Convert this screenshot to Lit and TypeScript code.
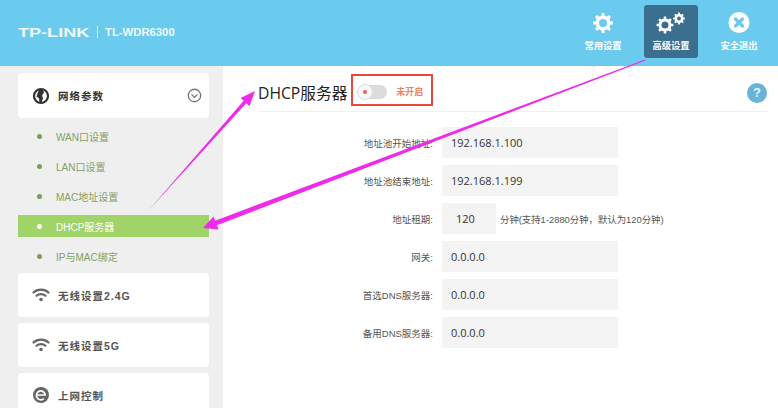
import { LitElement, html, css, svg } from "lit";
import { customElement } from "lit/decorators.js";

function gear(cx: number, cy: number, R: number, r: number, hole: number, teeth = 8) {
  let d = "";
  const step = (Math.PI * 2) / teeth;
  for (let i = 0; i < teeth; i++) {
    const a = i * step;
    const pts = [
      [r, a - step * 0.5],
      [r, a - step * 0.27],
      [R, a - step * 0.18],
      [R, a + step * 0.18],
      [r, a + step * 0.27],
    ];
    for (const [rad, t] of pts) {
      d += `${d ? "L" : "M"}${(cx + rad * Math.cos(t)).toFixed(2)} ${(cy + rad * Math.sin(t)).toFixed(2)}`;
    }
  }
  d += `Z M${cx - hole} ${cy}a${hole} ${hole} 0 1 0 ${hole * 2} 0a${hole} ${hole} 0 1 0 ${-hole * 2} 0Z`;
  return d;
}

const wifi = html`<svg class="ic" viewBox="0 0 20 20" width="20" height="20" fill="none" stroke="#666" stroke-width="2.2" stroke-linecap="round">
  <path d="M2.5 7.5C6.5 3.6 13.500 3.6 17.500 7.500"/><path d="M5.500 10.800C8 8.500 12 8.500 14.500 10.800"/><circle cx="10" cy="14.500" r="1.800" fill="#666" stroke="none"/></svg>`;

const subItems = ["WAN口设置", "LAN口设置", "MAC地址设置", "DHCP服务器", "IP与MAC绑定"];
const rows: [string, string][] = [
  ["地址池开始地址:", "192.168.1.100"],
  ["地址池结束地址:", "192.168.1.199"],
  ["地址租期:", "120"],
  ["网关:", "0.0.0.0"],
  ["首选DNS服务器:", "0.0.0.0"],
  ["备用DNS服务器:", "0.0.0.0"],
];

@customElement("app-root")
export class AppRoot extends LitElement {
  static styles = css`
    :host {
      display: block;
      position: relative;
      width: 778px;
      height: 408px;
      overflow: hidden;
      background: #fff;
      font-family: "Liberation Sans", "Noto Sans CJK SC", sans-serif;
    }
    .top {
      height: 66px;
      background: #6bcbee;
      display: flex;
      align-items: flex-start;
      padding: 0 12px 0 18px;
      box-sizing: border-box;
      color: #fff;
    }
    .logo {
      display: flex;
      align-items: center;
      height: 64px;
      font-weight: 700;
      color: #eef9fd;
    }
    .brand { font-size: 13px; transform: scaleX(1.39); transform-origin: left; width: 73px; white-space: nowrap; }
    .sep { width: 1px; height: 12px; background: #dff4fb; margin: 0 7px 0 6px; }
    .model { font-size: 11.300px; }
    .nav { margin-left: auto; display: flex; gap: 14px; padding-top: 5px; }
    .nav-item {
      width: 54px;
      height: 53px;
      border-radius: 3px;
      display: flex;
      flex-direction: column;
      align-items: center;
      font-size: 9.300px;
      line-height: 14px;
      font-weight: 700;
      box-sizing: border-box;
      padding-top: 5px;
    }
    .nav-item svg { display: block; flex: none; }
    .nav-item.on { background: #3a6f90; }
    .main { display: flex; height: 342px; }
    .side {
      width: 223px;
      flex: none;
      background: #efefef;
      box-sizing: border-box;
      padding: 7px 14px 0 18px;
    }
    .card {
      height: 44px;
      background: #fff;
      border-radius: 4px;
      display: flex;
      align-items: center;
      padding: 0 7px 0 14px;
      gap: 7px;
      font-size: 10.500px;
      font-weight: 700;
      color: #555;
      letter-spacing: 1px;
      margin-bottom: 6px;
    }
    .card.first { height: 45px; color: #333; margin-bottom: 7px; }
    .ic { flex: none; margin-left: -1px; }
    .chev { margin-left: auto; }
    .sub { margin-bottom: 6px; }
    .sub-item {
      height: 22px;
      margin-bottom: 8px;
      display: flex;
      align-items: center;
      padding-left: 19px;
      gap: 14px;
      font-size: 10px;
      color: #84a063;
    }
    .sub-item:last-child { margin-bottom: 0; }
    .dot { width: 5px; height: 5px; border-radius: 50%; background: #7d9c58; }
    .sub-item.on { background: #a0d468; color: #fff; }
    .sub-item.on .dot { background: #fff; }
    .content { flex: 1; padding: 8px 11px 0 35px; min-width: 0; }
    .head {
      height: 37px;
      display: flex;
      align-items: center;
      border-bottom: 1px solid #f0f0f0;
    }
    .title { font-size: 15.700px; color: #222; font-family: "Open Sans", "Noto Sans CJK SC", sans-serif; }
    .switch {
      display: flex;
      align-items: center;
      align-self: flex-start;
      box-sizing: border-box;
      width: 82px;
      height: 32px;
      margin-left: 4px;
      border: 2px solid #e8483c;
      padding: 3px 0 0 4px;
      font-size: 9px;
      font-weight: 700;
      color: #f0805f;
    }
    .track {
      position: relative;
      width: 30px;
      height: 14px;
      border-radius: 7px;
      background: #dcdcdc;
      margin-right: 9px;
    }
    .knob {
      position: absolute;
      left: 0;
      top: -1px;
      width: 16px;
      height: 16px;
      border-radius: 50%;
      background: #f8f8f8;
      border: 1px solid #ddd;
      box-sizing: border-box;
      display: flex;
      align-items: center;
      justify-content: center;
    }
    .knob i { width: 4px; height: 4px; border-radius: 50%; background: #f0604f; }
    .help {
      margin-left: auto;
      width: 20px;
      height: 20px;
      border-radius: 50%;
      background: #66b5d8;
      color: #e8f6fb;
      font-weight: 700;
      font-size: 13px;
      display: flex;
      align-items: center;
      justify-content: center;
    }
    .form { padding-top: 15px; display: flex; flex-direction: column; gap: 7px; }
    .row { display: flex; align-items: center; height: 31px; }
    .label { width: 175px; text-align: right; font-size: 9.500px; color: #555; flex: none; }
    .input {
      margin-left: 9px;
      width: 176px;
      height: 31px;
      background: #f4f4f4;
      display: flex;
      align-items: center;
      padding-left: 9px;
      box-sizing: border-box;
      font-size: 11px;
      color: #333;
      font-family: "Open Sans", sans-serif;
    }
    .input.short { width: 54px; padding-left: 14px; }
    .hint { margin-left: 4px; font-size: 9.400px; color: #555; white-space: nowrap; }
    .over { position: absolute; inset: 0; pointer-events: none; }
  `;

  render() {
    return html`
      <div class="top">
        <div class="logo"><span class="brand">TP-LINK</span><span class="sep"></span><span class="model">TL-WDR6300</span></div>
        <div class="nav">
          <div class="nav-item">
            <svg width="30" height="29" viewBox="0 0 30 29"><path fill="#fff" fill-rule="evenodd" d="${gear(15, 13, 10, 7.500, 4)}"/></svg>
            <span>常用设置</span>
          </div>
          <div class="nav-item on">
            <svg width="44" height="29" viewBox="0 0 44 29"><path fill="#fff" fill-rule="evenodd" d="${gear(16, 15, 8.500, 6.500, 3.500)}"/><path fill="#fff" fill-rule="evenodd" d="${gear(30, 8.500, 6, 4.500, 2)}"/></svg>
            <span>高级设置</span>
          </div>
          <div class="nav-item">
            <svg width="30" height="29" viewBox="0 0 30 29"><circle cx="15" cy="12.500" r="10.500" fill="#fff"/><path d="M11.500 9l7 7M18.500 9l-7 7" stroke="#6bcbee" stroke-width="3.200" stroke-linecap="round"/></svg>
            <span>安全退出</span>
          </div>
        </div>
      </div>
      <div class="main">
        <div class="side">
          <div class="card first">
            <svg class="ic" viewBox="0 0 20 20" width="20" height="20"><circle cx="10" cy="10" r="7" fill="none" stroke="#333" stroke-width="2.200"/><path d="M8 3.500h4l1 3-2 3 1 3-1.500 4h-2l-.5-4-2.500-2 1-3z" fill="#333"/></svg>
            <span>网络参数</span>
            <svg class="chev" viewBox="0 0 16 16" width="15" height="15" fill="none" stroke="#777" stroke-width="1.500"><circle cx="8" cy="8" r="6.600"/><path d="M4.800 6.800L8 10l3.200-3.200" stroke-width="1.500"/></svg>
          </div>
          <div class="sub">
            ${subItems.map(
              (s, i) => html`<div class="sub-item ${i === 3 ? "on" : ""}"><span class="dot"></span><span>${s}</span></div>`
            )}
          </div>
          <div class="card">${wifi}<span>无线设置2.4G</span></div>
          <div class="card">${wifi}<span>无线设置5G</span></div>
          <div class="card">
            <svg class="ic" viewBox="0 0 20 20" width="20" height="20"><circle cx="10" cy="10" r="8" fill="#666"/><path d="M5.800 10h8.400A4.400 4.400 0 1 0 12.800 13.600" fill="none" stroke="#fff" stroke-width="1.700"/></svg>
            <span>上网控制</span>
          </div>
        </div>
        <div class="content">
          <div class="head">
            <span class="title">DHCP服务器</span>
            <div class="switch">
              <span class="track"><span class="knob"><i></i></span></span>
              <span>未开启</span>
            </div>
            <span class="help">?</span>
          </div>
          <div class="form">
            ${rows.map(
              ([l, v], i) => html`<div class="row">
                <span class="label">${l}</span>
                <span class="input ${i === 2 ? "short" : ""}">${v}</span>
                ${i === 2 ? html`<span class="hint">分钟(支持1-2880分钟，默认为120分钟)</span>` : ""}
              </div>`
            )}
          </div>
        </div>
      </div>
      <svg class="over" width="778" height="408" viewBox="0 0 778 408">
        ${svg`<polygon fill="#ee2be8" points="148,211 246.300,103.200 249.500,106 255,91 240.500,98 243.700,100.800"/>`}
        ${svg`<polygon fill="#ee2be8" points="645,59.500 645.500,60.500 216.900,225.300 218.500,229.500 203,228 213.500,216.500 215.100,220.700"/>`}
      </svg>
    `;
  }
}
